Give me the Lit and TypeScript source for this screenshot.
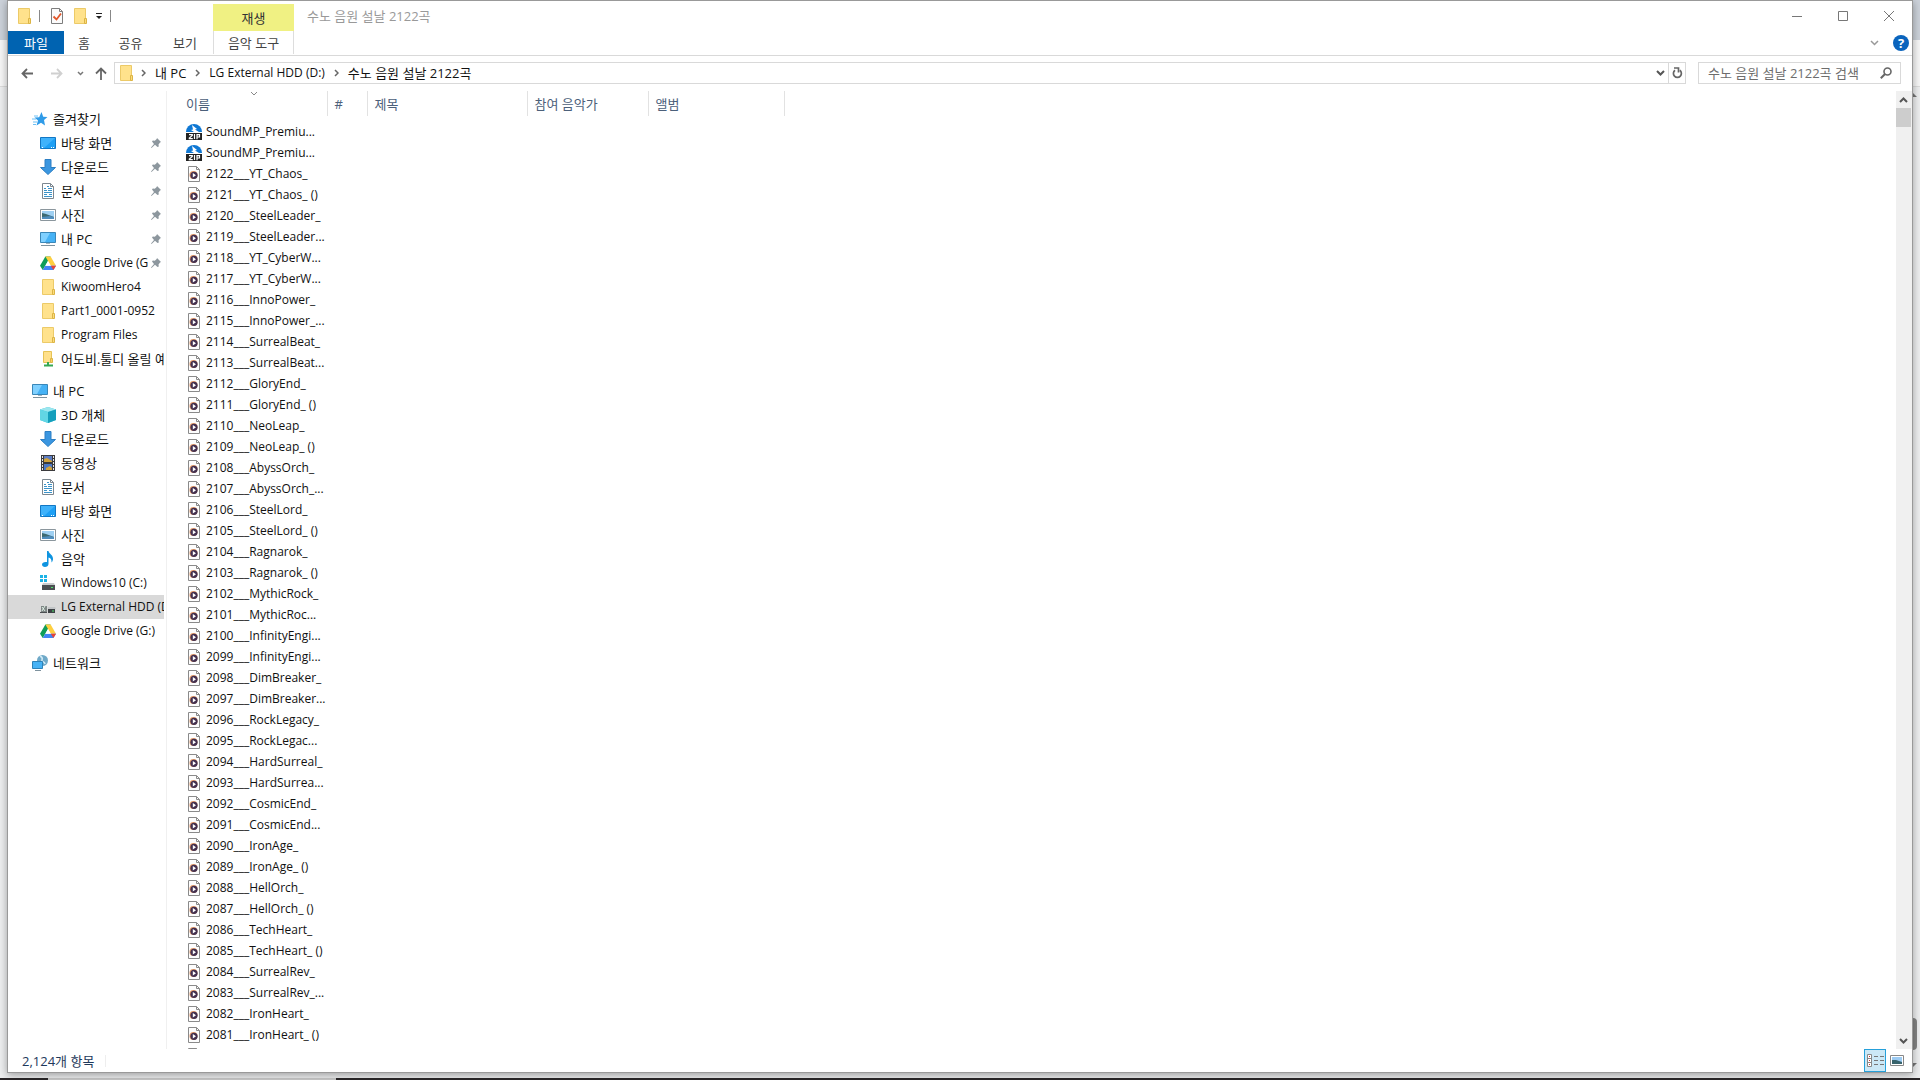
import { LitElement, html, svg, css, nothing } from "lit";
import { customElement, state } from "lit/decorators.js";

const icon = (body: unknown, w = 16, h = 16) =>
  html`<svg class="ico" width=${w} height=${h} viewBox="0 0 ${w} ${h}" aria-hidden="true">${body}</svg>`;

const chevron = (d: string, w: number, h: number, stroke = "#666", sw = 1.5) =>
  icon(svg`<path d=${d} fill="none" stroke=${stroke} stroke-width=${sw} />`, w, h);

const drawings: Record<string, unknown> = {
  star: svg`<path d="M9.500 1l1.700 4.700 4.300.4-3.500 3 1 5.400-4-2.800-4.500 2.800 1.500-5-3.500-3 4.700-.3z" fill="#2f9be8"/><path d="M0 8h4M1 11h4M2 5h4M1 13.500h3" stroke="#6cc0f5"/>`,
  desktop: svg`<path d="M.5 2.500h15v11H.5z" fill="#1ea0f5" stroke="#1277c4"/><path d="M1 3h14L4 13H1z" fill="#3fb2fb"/><path d="M2 12.500h1M11 12.500h1M13 12.500h1" stroke="#fff"/>`,
  down: svg`<path d="M5 .5h6v8h4.500L8 15.500.5 8.500H5z" fill="#3a96e0" stroke="#2c7fc4"/>`,
  doc: svg`<path d="M2.500.5h8l3 3v12h-11z" fill="#fff" stroke="#7c8790"/><path d="M10.500.5v3h3" fill="none" stroke="#7c8790"/><path d="M7 3.500h2M4 5.500h2M8 5.500h4M4 7.500h3M8 7.500h4M4 9.500h8M4 11.500h3M9 11.500h3M4 13.500h8" stroke="#3b93c9"/>`,
  photo: svg`<path d="M.5 2.500h15v11H.5z" fill="#fff" stroke="#8b969d"/><path d="M2 4h12v8H2z" fill="#9fd0f2"/><path d="M2 6l4 1 8 3v2H2z" fill="#3c6a72"/><path d="M2 10l8-1 4 1v2H2z" fill="#4f8dbd"/>`,
  pc: svg`<path d="M.5 1.500h15v10H.5z" fill="#46b2f5" stroke="#3a87b8"/><path d="M1 2h9L5 11H1z" fill="#7fd0ff"/><path d="M6 12h4v1H6z" fill="#9fb3bf"/><path d="M1 14.500h14" stroke="#7e929e"/>`,
  gdrive: svg`<path d="M5.400 1.500h5.200l-5.300 9.200L2.700 15 0 10.700z" fill="#0f9d58"/><path d="M5.400 1.500h5.200L16 10.700h-5.200z" fill="#ffcf3f"/><path d="M5.300 10.700H16L13.400 15H2.700z" fill="#4285f4"/><path d="M10.800 10.700H16L13.400 15z" fill="#ea4335"/><path d="M8 6l2.700 4.700H5.300z" fill="#fff"/>`,
  folder: svg`<path d="M2.500.5h11v15h-11z" fill="#ffe28c" stroke="#ecca68"/><path d="M12.500 10.500h2v5h-2z" fill="#fbdc7c" stroke="#dcb445"/>`,
  netfolder: svg`<path d="M3.500.5h8v11h-8z" fill="#ffe08a" stroke="#e6c355"/><path d="M10.500 7.500h2v4h-2z" fill="#fbd263" stroke="#dcb445"/><path d="M8 11v3M4 14.500h9" stroke="#35a853" stroke-width="2"/>`,
  cube: svg`<path d="M8 0l8 2.500v10.500L8 16 0 13V2.500z" fill="#38c3d9"/><path d="M8 0l8 2.500L8 5 0 2.500z" fill="#9ce6ee"/><path d="M0 2.500L8 5v11L0 13z" fill="#62d6e4"/><path d="M8 5l8-2.500V13L8 16z" fill="#159fbc"/>`,
  video: svg`<path d="M1 0h14v16H1z" fill="#3b3b3d"/><path d="M4 1h8v6H4z" fill="#5b7dc4"/><path d="M4 9h8v6H4z" fill="#4c78c6"/><path d="M4 4l3-1 5 3v1H4zM6 13l4-2 2 2v2H6z" fill="#d0a23c"/><path d="M2.500 1v14M13.500 1v14" stroke="#e8e8e8" stroke-dasharray="2 1"/>`,
  music: svg`<path d="M7 0h1.500c.5 3 5 4 4.500 8.500-.3 1.500-1 2.500-1.500 3 .3-3-1-4.500-3-5V13c0 2-1.700 3-3.500 3S2 15 2 13.500 3.500 11 5.500 11H7z" fill="#0f94e0"/>`,
  win: svg`<path d="M0 0h3v3H0zM4 0h3v3H4zM0 4h3v3H0zM4 4h3v3H4z" fill="#1cb3e6"/><path d="M3 8h11l1 2H2z" fill="#c9ccce"/><path d="M2 10h13v5H2z" fill="#4b4f52"/><path d="M11 12.500h2" stroke="#4ee06a"/>`,
  ext: svg`<path d="M1 7h6v6H1z" fill="#7d8584"/><path d="M2 8l3 4M5 7l-3 5" stroke="#dff0e6"/><path d="M8 8h7l1 2H8z" fill="#c2c5c7"/><path d="M8 10h7v4H8z" fill="#3d4144"/><path d="M0 13.500h7" stroke="#4b4f52"/><path d="M12 12h2" stroke="#4ee06a"/>`,
  net: svg`<circle cx="10.500" cy="5.500" r="5.500" fill="#6fa9c8"/><path d="M8 1c2 1 3 2 2 4s3 1 3 4" fill="none" stroke="#cfe9f5" stroke-width="1.500"/><path d="M.5 6.500h10v7H.5z" fill="#46b2f5" stroke="#2d82b8"/><path d="M3 15.500h6" stroke="#7e929e"/>`,
  zip: svg`<path d="M0 8a8 8 0 0 1 16 0z" fill="#0f78d4"/><path d="M6 1l5 4-2 .5 4 2.500H8l-3-2 2-.5z" fill="#fff"/><path d="M0 9h16v7H0z" fill="#222"/><path d="M3 10.700h3.300v.8L3.300 14v.6h3.500M8.500 10v5M11 15.200v-4.500h2.500v2.300H11" fill="none" stroke="#fff" stroke-width="1.200"/>`,
  audio: svg`<path d="M2.500.5h8l3 3v12h-11z" fill="#fdfdfd" stroke="#8a8a8a"/><path d="M10.500.5v3h3" fill="none" stroke="#8a8a8a"/><circle cx="7.500" cy="9" r="4" fill="#e59a68"/><circle cx="8" cy="9.300" r="3.600" fill="#43304f"/><path d="M6.800 7l3.200 2.200-3.200 2.200z" fill="#fff"/>`,
  check: svg`<path d="M2.500.5h8l3 3v12h-11z" fill="#fbfbfb" stroke="#7d7d7d"/><path d="M10.500.5v3h3" fill="none" stroke="#7d7d7d"/><path d="M4.500 8.500l3 3 4.500-6" fill="none" stroke="#e2572b" stroke-width="1.800"/>`,
  pin: svg`<path d="M6 0l4 4-1 .5-1.500 2 .3 2L6.500 9 4 6.800.5 10 0 9.500 3 6 1 3.500 1.800 2.500l2 .2L5.700 1z" fill="#8d979e"/>`,
};

interface TreeNode { label: string; icon: string; pinned?: boolean; selected?: boolean; }
interface Group { head: TreeNode; items: TreeNode[]; }

const n = (label: string, icon: string, extra: Partial<TreeNode> = {}): TreeNode => ({ label, icon, ...extra });
const isKorean = (s: string) => /[가-힣]/.test(s);

const groups: Group[] = [
  {
    head: n("즐겨찾기", "star"),
    items: [
      n("바탕 화면", "desktop", { pinned: true }),
      n("다운로드", "down", { pinned: true }),
      n("문서", "doc", { pinned: true }),
      n("사진", "photo", { pinned: true }),
      n("내 PC", "pc", { pinned: true }),
      n("Google Drive (G", "gdrive", { pinned: true }),
      n("KiwoomHero4", "folder"),
      n("Part1_0001-0952", "folder"),
      n("Program Files", "folder"),
      n("어도비.툴디 올릴 예", "netfolder"),
    ],
  },
  {
    head: n("내 PC", "pc"),
    items: [
      n("3D 개체", "cube"),
      n("다운로드", "down"),
      n("동영상", "video"),
      n("문서", "doc"),
      n("바탕 화면", "desktop"),
      n("사진", "photo"),
      n("음악", "music"),
      n("Windows10 (C:)", "win"),
      n("LG External HDD (D", "ext", { selected: true }),
      n("Google Drive (G:)", "gdrive"),
    ],
  },
  { head: n("네트워크", "net"), items: [] },
];

const tracks = [
  "YT_Chaos_", "YT_Chaos_ ()", "SteelLeader_", "SteelLeader...", "YT_CyberW...", "YT_CyberW...",
  "InnoPower_", "InnoPower_...", "SurrealBeat_", "SurrealBeat...", "GloryEnd_", "GloryEnd_ ()",
  "NeoLeap_", "NeoLeap_ ()", "AbyssOrch_", "AbyssOrch_...", "SteelLord_", "SteelLord_ ()",
  "Ragnarok_", "Ragnarok_ ()", "MythicRock_", "MythicRoc...", "InfinityEngi...", "InfinityEngi...",
  "DimBreaker_", "DimBreaker...", "RockLegacy_", "RockLegac...", "HardSurreal_", "HardSurrea...",
  "CosmicEnd_", "CosmicEnd...", "IronAge_", "IronAge_ ()", "HellOrch_", "HellOrch_ ()",
  "TechHeart_", "TechHeart_ ()", "SurrealRev_", "SurrealRev_...", "IronHeart_", "IronHeart_ ()",
];

const files = [
  { name: "SoundMP_Premiu...", icon: "zip" },
  { name: "SoundMP_Premiu...", icon: "zip" },
  ...tracks.map((t, i) => ({ name: `${2122 - i}___${t}`, icon: "audio" })),
  { name: "", icon: "audio" },
];

@customElement("app-root")
export class AppRoot extends LitElement {
  @state() private query = "";

  static styles = css`
    :host {
      display: block;
      height: 100vh;
      overflow: hidden;
      font: 13px/16px "Open Sans", "Noto Sans CJK KR", sans-serif;
      color: #111;
      --line: #d9d9d9;
    }
    * { box-sizing: border-box; }
    button, input { font: inherit; color: inherit; border: 0; background: none; padding: 0; margin: 0; }
    a { color: inherit; text-decoration: none; }
    ul { list-style: none; margin: 0; padding: 0; }
    .ico { display: block; flex: none; }
    .latin { font-size: 12px; }
    .desk {
      position: relative;
      height: 100%;
      display: flex;
      flex-direction: column;
      padding: 0 7px;
      background: linear-gradient(#ccd2da 0 40px, #f7f7f7 40px 86px, #dcdcdc 86px 87px, #eeeff0 87px);
    }
    .taskline { height: 2px; margin: 0 -7px; background: linear-gradient(90deg, #2b2729 0 48px, #c9c9c9 48px 336px, #2b2729 336px); }
    .under { flex: none; height: 5px; }
    .behind-thumb { position: absolute; right: 3px; bottom: 30px; width: 8px; height: 32px; border-radius: 4px; background: #858585; }
    .behind-up, .behind-down { position: absolute; right: 3px; width: 0; height: 0; border: 4px solid transparent; }
    .behind-up { top: 89px; border-bottom-color: #777; }
    .behind-down { bottom: 9px; border-top-color: #777; }
    .win {
      position: relative;
      flex: 1;
      min-height: 0;
      display: flex;
      flex-direction: column;
      background: #fff;
      border: 1px solid #999;
      box-shadow: 0 2px 8px rgba(0, 0, 0, .35);
    }
    .title { display: flex; height: 30px; align-items: stretch; }
    .quick { display: flex; align-items: center; gap: 7px; width: 205px; padding-left: 8px; }
    .quick button { display: flex; }
    .quick .props { padding-left: 2px; }
    .bar { width: 1px; height: 12px; background: #888; }
    .tool { width: 81px; margin-top: 3px; background: #f0f183; display: grid; place-items: center; color: #333; }
    .caption { padding-left: 13px; color: #999; align-self: center; flex: 1; }
    .ctl { width: 46px; display: grid; place-items: center; }
    .tabs { display: flex; height: 25px; border-bottom: 1px solid var(--line); color: #444; }
    .tabs .tab { height: 23px; }
    .tabs .file { width: 56px; background: #0063b1; color: #fff; }
    .t1 { width: 40px; }
    .t2 { width: 53px; }
    .t3 { width: 56px; }
    .tabs .music { width: 81px; border-left: 1px solid #ddd; border-right: 1px solid #ddd; }
    .sp { flex: 1; }
    .ribbon { display: flex; align-items: center; gap: 14px; padding-right: 3px; }
    .ribbon .fold { display: flex; }
    .ribbon .help { width: 16px; height: 16px; border-radius: 50%; background: #0a64bd; color: #fff; font-weight: 700; }
    .nav { display: flex; align-items: center; padding: 6px 11px 7px 13px; }
    .arrows { display: flex; align-items: center; width: 93px; }
    .arrows button { display: flex; }
    .arrows .fwd { margin-left: 18px; }
    .arrows .recent { margin-left: 14px; }
    .arrows .up { margin-left: 11px; }
    .addr { flex: 1; display: flex; height: 22px; border: 1px solid var(--line); align-items: center; padding-left: 3px; }
    .addr .place { padding-right: 7px; }
    .addr .seg { padding: 0 9px; }
    .addr .refresh { width: 17px; height: 20px; border-left: 1px solid var(--line); display: grid; place-items: center; }
    .drop { width: 15px; display: grid; place-items: center; }
    .search { width: 203px; margin-left: 12px; height: 22px; border: 1px solid var(--line); display: flex; align-items: center; padding: 0 8px 0 9px; }
    .search input { flex: 1; min-width: 0; outline: 0; }
    .search input::placeholder { color: #6d6d6d; opacity: 1; }
    .body { flex: 1; min-height: 0; display: flex; }
    .tree { width: 159px; flex: none; border-right: 1px solid #f0f0f0; padding: 16px 2px 0 0; overflow: hidden; }
    .tree ul + ul { margin-top: 8px; }
    .node { display: flex; height: 24px; align-items: center; gap: 5px; padding-left: 32px; white-space: nowrap; }
    .node.head { padding-left: 24px; }
    .node.sel { background: #d9d9d9; }
    .node .lbl { flex: 1; min-width: 0; overflow: hidden; }
    .node.pinned .lbl { overflow: visible; }
    .node .pin { flex: none; padding-right: 3px; }
    .main { flex: 1; min-width: 0; overflow: hidden; padding-left: 19px; }
    table { border-collapse: collapse; table-layout: fixed; width: 598px; }
    .c-name { width: 141px; }
    .c-num { width: 40px; }
    .c-title { width: 160px; }
    .c-artist { width: 121px; }
    .c-album { width: 136px; }
    th { height: 25px; padding: 0 0 0 7px; text-align: left; font-weight: 400; color: #4c607a; border-right: 1px solid #e2e2e2; position: relative; }
    th:first-child { padding-left: 0; }
    .sort { position: absolute; left: 64px; top: 0; }
    .gap td { height: 6px; }
    td { padding: 0; height: 21px; }
    .name { display: flex; align-items: center; gap: 4px; white-space: nowrap; height: 21px; padding-bottom: 1px; font-size: 12px; }
    .scroll { width: 16px; background: #f0f0f0; display: flex; flex-direction: column; justify-content: space-between; }
    .scroll button { height: 17px; width: 15px; display: grid; place-items: center; }
    .thumb { width: 15px; height: 19px; background: #cdcdcd; }
    .status { display: flex; height: 23px; align-items: center; padding-left: 14px; color: #1e395b; }
    .status .sep { width: 1px; height: 12px; margin-left: 11px; background: #eee; }
    .view { width: 22px; height: 23px; display: grid; place-items: center; }
    .view.on { background: #cbe8f6; border: 1px solid #26a0da; }
    .view.big { margin-right: 4px; }
  `;

  private node(item: TreeNode, head = false) {
    const cls = ["node", head && "head", item.selected && "sel", item.pinned && "pinned"].filter(Boolean).join(" ");
    return html`<li>
      <a href="#" class=${cls}>
        ${icon(drawings[item.icon])}<span class="lbl ${isKorean(item.label) ? "" : "latin"}">${item.label}</span>
        ${item.pinned ? html`<span class="pin">${icon(drawings.pin, 10, 10)}</span>` : nothing}
      </a>
    </li>`;
  }

  render() {
    const crumb = chevron("M1 1l3 3-3 3", 5, 8);
    return html`<div class="desk">
      <span class="behind-thumb"></span><span class="behind-up"></span><span class="behind-down"></span>
      <section class="win">
        <header class="title">
          <div class="quick">
            ${icon(drawings.folder)}
            <span class="bar"></span>
            <button class="props" aria-label="속성">${icon(drawings.check)}</button>
            <button aria-label="새 폴더">${icon(drawings.folder)}</button>
            <button aria-label="사용자 지정">${icon(svg`<path d="M1 1.500h6" stroke="#222"/><path d="M1 4h6L4 7z" fill="#222"/>`, 8, 8)}</button>
            <span class="bar"></span>
          </div>
          <div class="tool">재생</div>
          <div class="caption">수노 음원 설날 2122곡</div>
          <button class="ctl" aria-label="최소화">${icon(svg`<path d="M0 5.500h10" stroke="#777"/>`, 10, 10)}</button>
          <button class="ctl" aria-label="최대화">${icon(svg`<path d="M.5.5h9v9h-9z" fill="none" stroke="#777"/>`, 10, 10)}</button>
          <button class="ctl" aria-label="닫기">${icon(svg`<path d="M0 0l10 10M10 0L0 10" stroke="#777"/>`, 10, 10)}</button>
        </header>
        <nav class="tabs">
          <button class="tab file">파일</button><button class="tab t1">홈</button><button class="tab t2">공유</button><button class="tab t3">보기</button><button class="tab music">음악 도구</button>
          <span class="sp"></span>
          <div class="ribbon">
            <button class="fold" aria-label="리본 확장">${chevron("M1 1l3.500 3.500L8 1", 9, 6, "#999")}</button>
            <button class="help" aria-label="도움말">?</button>
          </div>
        </nav>
        <div class="nav">
          <div class="arrows">
            <button aria-label="뒤로">${chevron("M6 1L1.500 5.500 6 10M1.500 5.500H12", 12, 11, "#666", 1.8)}</button>
            <button class="fwd" aria-label="앞으로">${chevron("M6 1l4.500 4.500L6 10M10.500 5.500H0", 12, 11, "#d0d0d0", 1.8)}</button>
            <button class="recent" aria-label="최근 위치">${chevron("M1 1l2.500 2.500L6 1", 7, 5, "#777")}</button>
            <button class="up" aria-label="위로">${chevron("M1 6.500L6 1.500l5 5M6 1.500V13", 12, 13, "#666", 1.8)}</button>
          </div>
          <div class="addr">
            <span class="place">${icon(drawings.folder)}</span>${crumb}
            <a class="seg" href="#">내 PC</a>${crumb}<a class="seg latin" href="#">LG External HDD (D:)</a>${crumb}<a class="seg" href="#">수노 음원 설날 2122곡</a>
            <span class="sp"></span>
            <button class="drop" aria-label="이전 위치">${chevron("M1 1l3.500 3.500L8 1", 9, 6, "#555", 2)}</button>
            <button class="refresh" aria-label="새로 고침">${icon(svg`<path d="M7.800 3.200A4 4 0 1 1 3 3.200" fill="none" stroke="#666" stroke-width="1.700"/><path d="M2 1h4.500v4.500" fill="none" stroke="#666" stroke-width="1.700"/>`, 11, 12)}</button>
          </div>
          <label class="search">
            <input type="text" aria-label="검색" placeholder="수노 음원 설날 2122곡 검색" .value=${this.query}
              @input=${(e: Event) => (this.query = (e.target as HTMLInputElement).value)} />
            ${icon(svg`<circle cx="7.500" cy="4.500" r="3.500" fill="none" stroke="#666" stroke-width="1.600"/><path d="M5 7L.8 11.200" stroke="#666" stroke-width="2"/>`, 12, 12)}
          </label>
        </div>
        <div class="body">
          <nav class="tree">
            ${groups.map((g) => html`<ul>${this.node(g.head, true)}${g.items.map((i) => this.node(i))}</ul>`)}
          </nav>
          <main class="main">
            <table>
              <colgroup><col class="c-name" /><col class="c-num" /><col class="c-title" /><col class="c-artist" /><col class="c-album" /></colgroup>
              <thead><tr>
                <th>이름<span class="sort">${chevron("M1 1l3 3 3-3", 8, 5, "#888", 1)}</span></th><th>#</th><th>제목</th><th>참여 음악가</th><th>앨범</th>
              </tr></thead>
              <tbody>
                <tr class="gap"><td colspan="5"></td></tr>
                ${files.map((f) => html`<tr><td><div class="name">${icon(drawings[f.icon])}<span>${f.name}</span></div></td><td></td><td></td><td></td><td></td></tr>`)}
              </tbody>
            </table>
          </main>
          <div class="scroll">
            <div><button aria-label="위로 스크롤">${chevron("M1 5l3.500-3.500L8 5", 9, 6, "#555", 2)}</button><div class="thumb"></div></div>
            <button aria-label="아래로 스크롤">${chevron("M1 1l3.500 3.500L8 1", 9, 6, "#555", 2)}</button>
          </div>
        </div>
        <footer class="status">
          <span>2,124개 항목</span><span class="sep"></span><span class="sp"></span>
          <button class="view on" aria-label="자세히">${icon(svg`<path d="M.5.5h4v12h-4zM0 4.500h5M0 8.500h5" fill="#fff" stroke="#888"/><path d="M7 2.500h4M13 2.500h4M7 6.500h4M13 6.500h4M7 10.500h4M13 10.500h4" stroke="#777"/><path d="M2 2.500h1M2 6.500h1M2 10.500h1" stroke="#c33"/>`, 17, 13)}</button>
          <button class="view big" aria-label="큰 아이콘">${icon(svg`<path d="M.5.5h13v10H.5z" fill="#fff" stroke="#888"/><path d="M2 2h10v7H2z" fill="#9ccbf3"/><path d="M2 5l4 0 6 2v2H2z" fill="#37636c"/>`, 14, 11)}</button>
        </footer>
      </section>
      <div class="under"></div>
      <div class="taskline"></div>
    </div>`;
  }
}
